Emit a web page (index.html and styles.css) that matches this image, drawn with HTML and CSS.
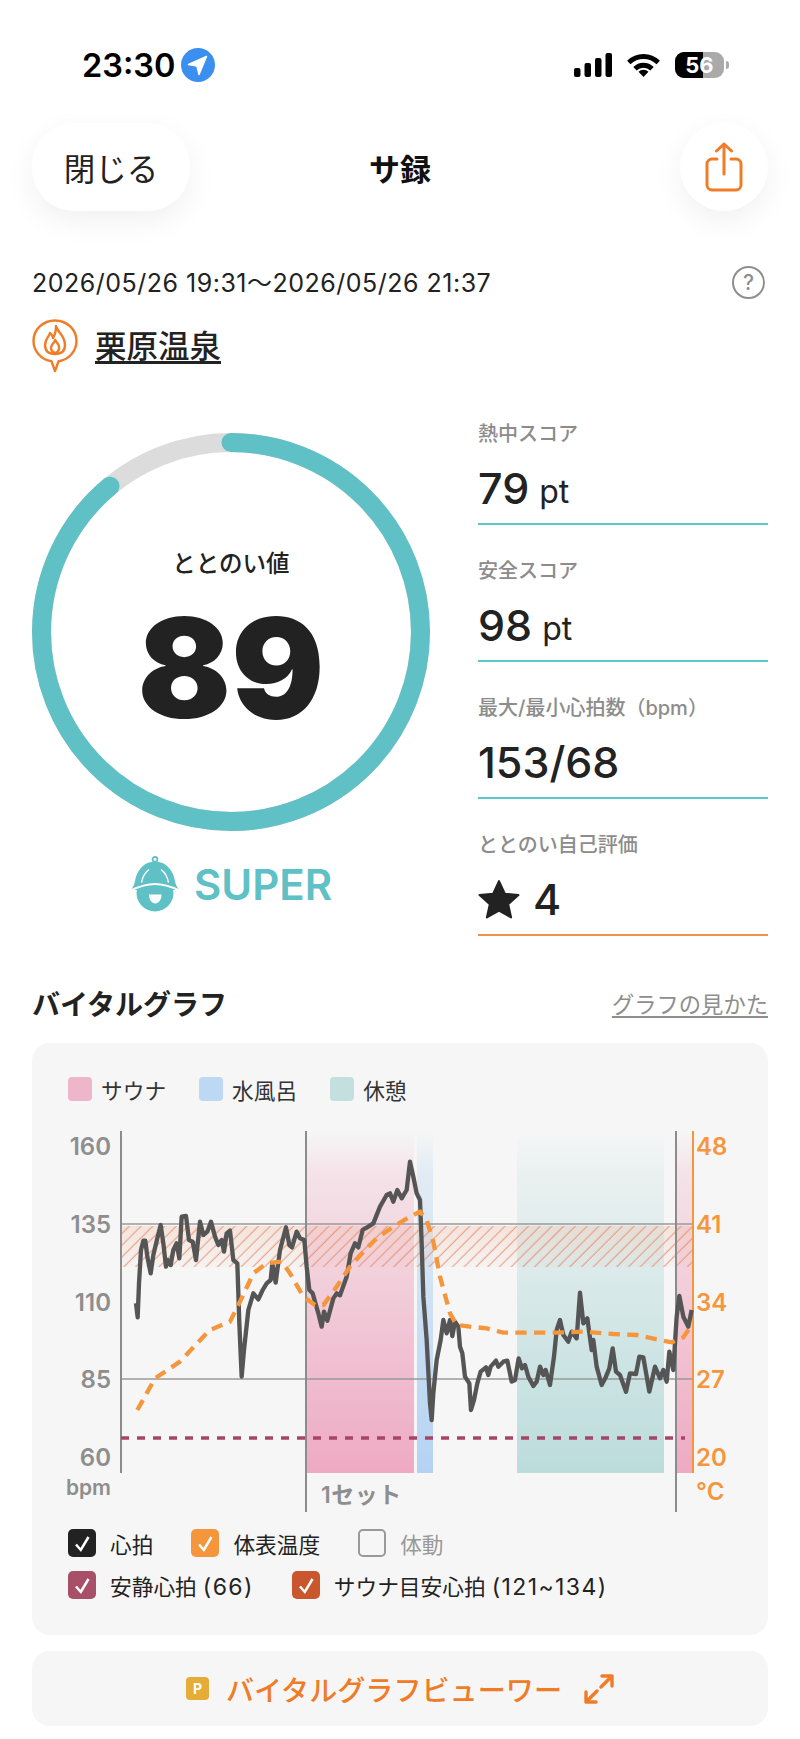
FILE: index.html
```html
<!DOCTYPE html>
<html lang="ja">
<head>
    <meta charset="UTF-8">
    <meta name="viewport" content="width=device-width, initial-scale=1.0">
    <title>サ録</title>
    <link rel="stylesheet" href="styles.css">
</head>
<body>
    <div class="status_bar">
        <div class="status_left">
            <span class="status_time">23:30</span>
            <svg class="status_loc" viewBox="0 0 34 34"><circle cx="17" cy="17" r="17" fill="#3b8ff0"/><path d="M25.5 8.5 7.5 16.5 16 18 18 26.5Z" fill="#fff" stroke="#fff" stroke-width="1.5" stroke-linejoin="round"/></svg>
        </div>
        <div class="status_right">
            <svg class="status_signal" viewBox="0 0 38 24"><rect x="0" y="15" width="6.500" height="9" rx="2"/><rect x="10.500" y="10" width="6.500" height="14" rx="2"/><rect x="21" y="5" width="6.500" height="19" rx="2"/><rect x="31.500" y="0" width="6.500" height="24" rx="2"/></svg>
            <svg class="status_wifi" viewBox="0 0 33 24"><path d="M1.800 9.500a21 21 0 0 1 29.400 0M8 15.800a12 12 0 0 1 17 0" fill="none" stroke="#000" stroke-width="4.800"/><path d="M16.500 24 11.500 18.800a7 7 0 0 1 10 0Z"/></svg>
            <div class="battery"><span class="battery_fill"></span><span class="battery_num">56</span></div>
        </div>
    </div>

    <div class="page">
        <div class="nav">
            <button class="nav_close" type="button">閉じる</button>
            <div class="nav_title">サ録</div>
            <button class="nav_share" type="button">
                <svg viewBox="0 0 38 50" fill="none" stroke="#f07c28" stroke-width="3" stroke-linecap="round" stroke-linejoin="round"><path d="M19 32V2M11.500 9 19 2l7.500 7"/><path d="M12 17H7a5 5 0 0 0-5 5v21a5 5 0 0 0 5 5h24a5 5 0 0 0 5-5V22a5 5 0 0 0-5-5h-5"/></svg>
            </button>
        </div>

        <div class="date_row">
            <span class="date_text">2026/05/26 19:31～2026/05/26 21:37</span>
            <span class="help">?</span>
        </div>

        <div class="venue">
            <svg class="venue_icon" viewBox="0 0 46 54" fill="none" stroke="#f07c28" stroke-width="2.400" stroke-linejoin="round"><path d="M23 52 19.500 42.300C9 40.500 1.500 32 1.500 22 1.500 10.500 11 1.500 23 1.500S44.500 10.500 44.500 22C44.500 32 37 40.500 26.500 42.300Z"/><path d="M24 7C25 13 33 16 33 26 33 32 29 35 23 35S13 32 13 26C13 20 17 18 18 14 20 16 21 18 21 19 23 16 24 11 24 7Z"/><path d="M23 34C19 33 18 29 20 26 21 24 23 23 23 21 25 24 28 26 27 30 26.500 32 25 34 23 34Z"/></svg>
            <a class="venue_name">栗原温泉</a>
        </div>

        <div class="score_area">
            <div class="score_left">
                <div class="ring">
                    <svg class="ring_svg" viewBox="0 0 398 398">
                        <circle cx="199" cy="199" r="189.500" fill="none" stroke="#dcdcdc" stroke-width="19"/>
                        <circle cx="199" cy="199" r="189.500" fill="none" stroke="#5fc0c6" stroke-width="19" stroke-linecap="round" stroke-dasharray="1059 1191" transform="rotate(-90 199 199)"/>
                    </svg>
                    <div class="ring_label">ととのい値</div>
                    <div class="ring_value">89</div>
                </div>
                <div class="rank">
                    <svg class="rank_icon" viewBox="0 0 50 56">
                        <circle cx="25" cy="3.300" r="2.400" fill="none" stroke="#5fc0c6" stroke-width="1.800"/>
                        <path d="M.5 34C3.500 31 4.500 28 5 25 7 14 14 5.500 25 5.500S43 14 45 25C45.500 28 46.500 31 49.500 34Z" fill="#5fc0c6"/>
                        <circle cx="25" cy="37" r="18.500" fill="#5fc0c6"/>
                        <path d="M11.500 26.500C12.500 21 15 16.500 19 13.500M38.500 26.500C37.500 21 35 16.500 31 13.500" fill="none" stroke="#fff" stroke-width="1.400"/>
                        <path d="M.5 34.500C8 31 16 28 25 28S42 31 49.500 34.500" fill="none" stroke="#fff" stroke-width="2"/>
                        <path d="M19 38.500H31.500C31.500 44 28.500 47.500 25.200 47.500S19 44 19 38.500Z" fill="#fff"/>
                    </svg>
                    <span class="rank_text">SUPER</span>
                </div>
            </div>
            <div class="score_right">
                <div class="stat">
                    <div class="stat_label">熱中スコア</div>
                    <div class="stat_value">79<small>pt</small></div>
                </div>
                <div class="stat">
                    <div class="stat_label">安全スコア</div>
                    <div class="stat_value">98<small>pt</small></div>
                </div>
                <div class="stat">
                    <div class="stat_label">最大/最小心拍数（bpm）</div>
                    <div class="stat_value">153/68</div>
                </div>
                <div class="stat stat_self">
                    <div class="stat_label">ととのい自己評価</div>
                    <div class="stat_value">
                        <svg class="star" viewBox="0 0 40 38"><path d="M20 2 25.500 14 38.500 15.200 28.700 24 31.500 36.500 20 30 8.500 36.500 11.300 24 1.500 15.200 14.500 14Z" fill="#222" stroke="#222" stroke-width="2" stroke-linejoin="round"/></svg>4
                    </div>
                </div>
            </div>
        </div>

        <div class="section_head">
            <h2 class="section_title">バイタルグラフ</h2>
            <a class="section_link">グラフの見かた</a>
        </div>

        <div class="graph_card">
            <div class="legend">
                <span class="legend_item"><i class="swatch swatch_sauna"></i>サウナ</span>
                <span class="legend_item"><i class="swatch swatch_water"></i>水風呂</span>
                <span class="legend_item"><i class="swatch swatch_rest"></i>休憩</span>
            </div>

            <svg class="graph" viewBox="32 1110 736 410">
                <defs>
                    <linearGradient id="fade_sauna" x1="0" y1="0" x2="0" y2="1"><stop offset="0" stop-color="#eeaac2" stop-opacity="0"/><stop offset=".12" stop-color="#eeaac2" stop-opacity=".25"/><stop offset="1" stop-color="#eeaac2"/></linearGradient>
                    <linearGradient id="fade_water" x1="0" y1="0" x2="0" y2="1"><stop offset="0" stop-color="#b4d3f2" stop-opacity="0"/><stop offset=".12" stop-color="#b4d3f2" stop-opacity=".3"/><stop offset="1" stop-color="#b4d3f2"/></linearGradient>
                    <linearGradient id="fade_rest" x1="0" y1="0" x2="0" y2="1"><stop offset="0" stop-color="#bcdcdc" stop-opacity="0"/><stop offset=".12" stop-color="#bcdcdc" stop-opacity=".2"/><stop offset="1" stop-color="#bcdcdc"/></linearGradient>
                    <pattern id="hatch" width="8.300" height="8.300" patternUnits="userSpaceOnUse" patternTransform="rotate(45)"><line x1="4" y1="0" x2="4" y2="8.300" stroke="#e0805c" stroke-width="1.200" stroke-opacity=".65"/></pattern>
                    <linearGradient id="fade_band" x1="0" y1="0" x2="0" y2="1"><stop offset="0" stop-color="#f0b79e" stop-opacity=".3"/><stop offset="1" stop-color="#f0b79e" stop-opacity=".05"/></linearGradient>
                </defs>

                <rect x="306" y="1131" width="108" height="342" fill="url(#fade_sauna)"/>
                <rect x="417" y="1131" width="16" height="342" fill="url(#fade_water)"/>
                <rect x="517" y="1131" width="147" height="342" fill="url(#fade_rest)"/>
                <rect x="677" y="1131" width="16" height="342" fill="url(#fade_sauna)"/>

                <rect x="121" y="1226" width="572" height="41" fill="url(#fade_band)"/>
                <rect x="121" y="1226" width="572" height="41" fill="url(#hatch)"/>

                <line class="grid_line" x1="121" y1="1224" x2="693" y2="1224"/>
                <line class="grid_line" x1="121" y1="1379" x2="693" y2="1379"/>
                <line class="axis_line" x1="121" y1="1131" x2="121" y2="1473"/>
                <line class="axis_line" x1="306" y1="1131" x2="306" y2="1512"/>
                <line class="axis_line" x1="676" y1="1131" x2="676" y2="1512"/>
                <line class="axis_temp" x1="693" y1="1131" x2="693" y2="1473"/>
                <line class="rest_line" x1="121" y1="1438" x2="685" y2="1438"/>

                <g transform="translate(40 1110) scale(.33333)">
                    <polyline class="line_hr" points="288,580 293,622 297,520 303,420 310,392 316,392 322,440 332,490 340,435 352,385 362,345 370,400 378,470 384,450 392,465 400,420 410,400 418,445 425,320 438,318 447,390 458,395 468,450 480,335 490,375 502,365 513,335 525,380 535,405 545,390 552,425 560,370 570,362 580,450 592,460 598,640 605,800 612,720 625,600 640,550 655,568 668,540 680,520 692,510 697,460 707,518 720,420 738,352 748,405 756,412 770,365 780,385 793,390 800,470 808,540 818,550 835,610 845,650 852,605 862,632 880,565 890,550 900,556 920,500 932,430 945,400 955,412 968,360 985,350 1000,340 1020,290 1040,255 1050,250 1060,275 1072,240 1085,265 1100,240 1110,155 1120,200 1130,250 1140,270 1145,400 1150,560 1160,690 1170,880 1175,930 1180,850 1190,750 1202,690 1210,630 1220,670 1230,630 1237,678 1245,635 1255,650 1260,710 1267,730 1275,800 1288,820 1293,900 1302,870 1312,820 1322,785 1338,772 1345,795 1352,770 1368,752 1375,770 1390,755 1402,752 1415,815 1425,810 1436,745 1446,775 1455,765 1465,800 1480,828 1490,815 1500,770 1510,795 1517,780 1530,825 1542,740 1550,660 1560,630 1570,675 1585,695 1595,665 1610,685 1620,548 1630,640 1642,625 1655,720 1660,690 1670,770 1685,825 1698,800 1708,775 1718,715 1728,785 1740,795 1758,845 1770,790 1788,792 1798,740 1810,742 1828,845 1845,770 1860,805 1870,780 1880,815 1888,725 1900,780 1910,620 1918,558 1930,620 1945,650 1955,600"/>
                    <polyline class="line_temp" points="292,900 345,805 420,755 490,680 510,660 570,635 600,575 640,490 680,460 725,455 750,490 790,560 825,585 850,585 880,545 930,470 975,420 1010,385 1060,350 1110,320 1140,305 1160,330 1180,395 1200,500 1230,610 1250,645 1290,650 1340,655 1390,668 1480,668 1550,668 1630,665 1720,672 1790,675 1850,688 1895,697 1930,682 1958,640"/>
                </g>

                <g class="label_left">
                    <text x="111" y="1155">160</text>
                    <text x="111" y="1233">135</text>
                    <text x="111" y="1311">110</text>
                    <text x="111" y="1388">85</text>
                    <text x="111" y="1466">60</text>
                    <text class="label_unit" x="111" y="1495">bpm</text>
                </g>
                <g class="label_right">
                    <text x="696" y="1155">48</text>
                    <text x="696" y="1233">41</text>
                    <text x="696" y="1311">34</text>
                    <text x="696" y="1388">27</text>
                    <text x="696" y="1466">20</text>
                    <text x="696" y="1500">°C</text>
                </g>
                <text class="label_set" x="321" y="1503">1セット</text>
            </svg>

            <div class="check_rows">
                <div class="check_row">
                    <label class="check"><span class="box box_hr"><svg viewBox="0 0 28 28"><path class="tick" d="M8 15.500 12.800 21 20.500 8"/></svg></span>心拍</label>
                    <label class="check"><span class="box box_temp"><svg viewBox="0 0 28 28"><path class="tick" d="M8 15.500 12.800 21 20.500 8"/></svg></span>体表温度</label>
                    <label class="check check_off"><span class="box box_off"></span>体動</label>
                </div>
                <div class="check_row">
                    <label class="check"><span class="box box_rest"><svg viewBox="0 0 28 28"><path class="tick" d="M8 15.500 12.800 21 20.500 8"/></svg></span><span>安静心拍 <span class="check_num">(66)</span></span></label>
                    <label class="check"><span class="box box_target"><svg viewBox="0 0 28 28"><path class="tick" d="M8 15.500 12.800 21 20.500 8"/></svg></span><span>サウナ目安心拍 <span class="check_num">(121~134)</span></span></label>
                </div>
            </div>
        </div>

        <button class="viewer_btn" type="button">
            <span class="viewer_badge">P</span>
            <span class="viewer_text">バイタルグラフビューワー</span>
            <svg class="viewer_icon" viewBox="0 0 30 30" fill="none" stroke="#f07c28" stroke-width="3.400" stroke-linecap="round" stroke-linejoin="round"><path d="M18 2H28V12M28 2 17 13M2 18V28H12M2 28 13 17"/></svg>
        </button>
    </div>
</body>
</html>
```

FILE: styles.css
```css
* {
    box-sizing: border-box;
}
body {
    margin: 0;
    background-color: #fff;
    color: #222;
    font-family: Inter, "Noto Sans CJK JP", sans-serif;
}

/* status bar */
.status_bar {
    height: 82px;
    margin-top: 24px;
    padding: 0 76px 0 82px;
    display: flex;
    justify-content: space-between;
    align-items: center;
}
.status_left {
    display: flex;
    align-items: center;
    gap: 6px;
}
.status_time {
    font-size: 32.500px;
    font-weight: 600;
    color: #000;
}
.status_loc {
    width: 34px;
    height: 34px;
}
.status_right {
    display: flex;
    align-items: center;
}
.status_signal {
    width: 38px;
    height: 24px;
    margin-right: 15px;
}
.status_wifi {
    width: 33px;
    height: 24px;
    margin-right: 15px;
}
.battery {
    position: relative;
    width: 49px;
    height: 26px;
    background-color: #aaa;
    border-radius: 9px;
    display: flex;
    align-items: center;
    justify-content: center;
}
.battery::after {
    content: "";
    position: absolute;
    top: 9px;
    right: -5px;
    width: 3px;
    height: 8px;
    background-color: #aaa;
    border-radius: 0 3px 3px 0;
}
.battery_fill {
    position: absolute;
    top: 0;
    left: 0;
    bottom: 0;
    width: 28px;
    background-color: #000;
    border-radius: 9px 0 0 9px;
}
.battery_num {
    position: relative;
    color: #fff;
    font-size: 22px;
    font-weight: 700;
}

.page {
    padding: 0 32px;
}

/* nav */
.nav {
    margin-top: 17px;
    display: grid;
    grid-template-columns: 1fr auto 1fr;
    align-items: center;
    height: 88px;
}
.nav_close {
    width: 158px;
    height: 88px;
    border: 0;
    border-radius: 42px;
    background-color: #fff;
    box-shadow: 0 10px 30px rgba(0,0,0, 0.06);
    font-family: inherit;
    font-size: 31.500px;
    color: #222;
}
.nav_title {
    font-size: 31px;
    font-weight: 700;
    color: #111;
}
.nav_share {
    justify-self: end;
    width: 88px;
    height: 88px;
    padding: 0;
    border: 0;
    border-radius: 50%;
    background-color: #fff;
    box-shadow: 0 10px 30px rgba(0,0,0, 0.06);
    display: flex;
    align-items: center;
    justify-content: center;
}
.nav_share svg {
    width: 38px;
    height: 50px;
}

.date_row {
    margin-top: 56px;
    height: 32px;
    padding-right: 3px;
    display: flex;
    justify-content: space-between;
    align-items: center;
    color: #222;
}
.date_text {
    font-size: 25px;
    letter-spacing: 0.5px;
    line-height: 28px;
}
.help {
    width: 33px;
    height: 33px;
    margin-bottom: 2px;
    border: 2.500px solid #8e8e8e;
    border-radius: 50%;
    display: flex;
    align-items: center;
    justify-content: center;
    font-size: 21px;
    font-weight: 500;
    color: #8e8e8e;
}

.venue {
    margin-top: 20px;
    height: 54px;
    display: flex;
    align-items: center;
    gap: 17px;
}
.venue_icon {
    width: 46px;
    height: 54px;
}
.venue_name {
    margin-bottom: 4px;
    font-size: 31.500px;
    font-weight: 500;
    text-decoration: underline;
    text-underline-offset: 3px;
}

/* score */
.score_area {
    margin-top: 44px;
    display: flex;
    justify-content: space-between;
}
.score_left {
    width: 398px;
    padding-top: 16px;
}
.ring {
    position: relative;
    width: 398px;
    height: 398px;
    display: flex;
    flex-direction: column;
    align-items: center;
}
.ring_svg {
    position: absolute;
    top: 0;
    left: 0;
    width: 398px;
    height: 398px;
}
.ring_label {
    margin-top: 114px;
    font-size: 23.500px;
    font-weight: 500;
    line-height: 34px;
}
.ring_value {
    margin-top: 2px;
    font-size: 138px;
    font-weight: 900;
    line-height: 170px;
}
.rank {
    margin-top: 25px;
    display: flex;
    align-items: center;
    justify-content: center;
    gap: 14px;
}
.rank_icon {
    width: 50px;
    height: 56px;
}
.rank_text {
    font-size: 42px;
    font-weight: 600;
    color: #5fc0c6;
}
.score_right {
    width: 290px;
    display: flex;
    flex-direction: column;
    gap: 29px;
}
.stat {
    height: 108px;
    border-bottom: 2px solid #5cc8c8;
}
.stat_self {
    border-bottom-color: #f0924a;
}
.stat_label {
    height: 28px;
    line-height: 34px;
    font-size: 20px;
    font-weight: 500;
    color: #8c8c8c;
}
.stat_value {
    height: 78px;
    padding-top: 8px;
    display: flex;
    align-items: center;
    font-size: 43px;
    font-weight: 500;
}
.stat_value small {
    margin-left: 10px;
    padding-top: 6px;
    font-size: 32px;
    font-weight: 400;
}
.star {
    width: 42px;
    height: 40px;
    margin-right: 13px;
}

/* graph */
.section_head {
    margin-top: 50px;
    height: 34px;
    display: flex;
    justify-content: space-between;
    align-items: center;
}
.section_title {
    margin: 0;
    font-size: 28px;
    font-weight: 700;
}
.section_link {
    font-size: 22.300px;
    color: #8e8e8e;
    text-decoration: underline;
    text-underline-offset: 3px;
}
.graph_card {
    margin-top: 23px;
    padding: 34px 0 36px;
    background-color: #f6f6f6;
    border-radius: 18px;
}
.legend {
    height: 24px;
    padding-left: 36px;
    display: flex;
    gap: 33px;
}
.legend_item {
    display: flex;
    align-items: center;
    gap: 9px;
    font-size: 21.700px;
    color: #333;
}
.swatch {
    width: 24px;
    height: 24px;
    border-radius: 4px;
}
.swatch_sauna {
    background-color: #eeb6cb;
}
.swatch_water {
    background-color: #bcd8f3;
}
.swatch_rest {
    background-color: #c3e0de;
}
.graph {
    display: block;
    width: 736px;
    height: 410px;
    margin-top: 9px;
}
.grid_line {
    stroke: #9a9a9a;
    stroke-width: 1.500;
}
.axis_line {
    stroke: #8c8c8c;
    stroke-width: 2;
}
.axis_temp {
    stroke: #f5963c;
    stroke-width: 2;
}
.rest_line {
    stroke: #a84468;
    stroke-width: 3.500;
    stroke-dasharray: 8 8;
}
.line_hr {
    fill: none;
    stroke: #555;
    stroke-width: 13;
    stroke-linejoin: round;
}
.line_temp {
    fill: none;
    stroke: #f5963c;
    stroke-width: 13;
    stroke-dasharray: 34 22;
}
.label_left text {
    text-anchor: end;
    font-size: 24px;
    font-weight: 600;
    fill: #8e8e8e;
}
.label_left .label_unit {
    font-size: 21px;
}
.label_right text {
    font-size: 24px;
    font-weight: 600;
    fill: #f5963c;
}
.label_set {
    font-size: 23px;
    font-weight: 600;
    letter-spacing: 0.5px;
    fill: #8e8e8e;
}
.check_rows {
    margin-top: 9px;
    padding-left: 36px;
    display: flex;
    flex-direction: column;
    gap: 14px;
}
.check_row {
    display: flex;
    gap: 38px;
}
.check {
    height: 28px;
    display: flex;
    align-items: center;
    gap: 14px;
    font-size: 21.700px;
    color: #222;
}
.check_num {
    font-size: 23px;
    letter-spacing: 1.400px;
}
.check_off {
    color: #999;
}
.box {
    width: 28px;
    height: 28px;
    border-radius: 5px;
}
.box svg {
    display: block;
    width: 28px;
    height: 28px;
}
.tick {
    fill: none;
    stroke: #fff;
    stroke-width: 2.500;
}
.box_hr {
    background-color: #222;
}
.box_temp {
    background-color: #f5963c;
}
.box_off {
    border: 2.500px solid #999;
}
.box_rest {
    background-color: #a85068;
}
.box_target {
    background-color: #c9562c;
}
.viewer_btn {
    width: 736px;
    height: 75px;
    margin-top: 16px;
    border: 0;
    border-radius: 18px;
    background-color: #f6f6f6;
    display: flex;
    align-items: center;
    justify-content: center;
    font-family: inherit;
}
.viewer_badge {
    width: 23px;
    height: 23px;
    border-radius: 4px;
    background-color: #e5ad38;
    color: #fff;
    font-size: 14px;
    font-weight: 700;
    line-height: 23px;
    text-align: center;
}
.viewer_text {
    margin: 0 22px 0 17px;
    font-size: 28.100px;
    font-weight: 500;
    color: #f07c28;
}
.viewer_icon {
    width: 30px;
    height: 30px;
}
```
